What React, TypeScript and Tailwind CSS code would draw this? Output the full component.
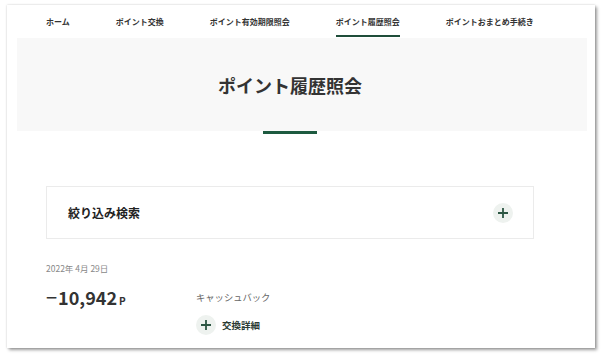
import React from 'react';

const tabs = ['ホーム', 'ポイント交換', 'ポイント有効期限照会', 'ポイント履歴照会', 'ポイントおまとめ手続き'];

function PlusIcon({ size = 12 }: { size?: number }) {
  return (
    <svg width={size} height={size} viewBox="0 0 12 12" fill="none">
      <path d="M6 1v10M1 6h10" stroke="#2c5643" strokeWidth="1.8" />
    </svg>
  );
}

export default function App() {
  return (
    <div className="w-[604px] h-[361px] bg-white pt-[5px] pl-[7px] font-['Noto_Sans_CJK_JP','Noto_Sans',sans-serif] text-[#333]">
      <div className="w-[588px] h-[343px] bg-white overflow-hidden shadow-[0_0_2px_rgba(0,0,0,0.18),2px_2px_3px_rgba(0,0,0,0.38)]">
        {/* Tabs */}
        <div className="h-[33px] flex pl-[39px] gap-[46px] text-[8px] font-bold">
          {tabs.map((t) => (
            <div key={t} className="relative h-full flex items-center">
              {t}
              {t === 'ポイント履歴照会' && (
                <div className="absolute left-0 right-0 bottom-[1px] h-[2px] bg-[#1f4d3a]" />
              )}
            </div>
          ))}
        </div>

        {/* Hero */}
        <div className="ml-[10px] w-[570px] h-[93px] bg-[#f8f8f8] flex items-center">
          <div className="ml-[29px] w-[488px] text-center text-[18px] font-bold leading-none text-[#333] mt-[1px]">
            ポイント履歴照会
          </div>
        </div>
        <div className="ml-[39px] w-[488px] flex justify-center">
          <div className="w-[54px] h-[3px] bg-[#1d5a40]" />
        </div>

        {/* Filter */}
        <div className="mt-[52px] ml-[39px] w-[488px] h-[53px] border border-[#ebebeb] flex items-center justify-between pl-[21px] pr-[20px]">
          <span className="text-[12px] font-bold text-[#222]">絞り込み検索</span>
          <button className="w-[20px] h-[20px] rounded-full bg-[#eef2ef] flex items-center justify-center">
            <PlusIcon />
          </button>
        </div>

        {/* History item */}
        <div className="ml-[39px] w-[488px]">
          <div className="mt-[23px] text-[8.5px] leading-[12px] text-[#888]">2022年 4月 29日</div>
          <div className="mt-[11px] flex items-start">
            <div className="w-[150px] leading-[24px] font-bold text-[#333]">
              <span className="text-[20px] font-normal mr-[1px]">−</span>
              <span className="text-[18px]">10,942</span>
              <span className="text-[10px] ml-[2px]">P</span>
            </div>
            <div>
              <div className="leading-[24px] text-[9.3px] text-[#666]">キャッシュバック</div>
              <div className="mt-[6px] flex items-center gap-[6px]">
                <div className="w-[20px] h-[20px] rounded-full bg-[#eef2ef] flex items-center justify-center">
                  <PlusIcon />
                </div>
                <span className="text-[9.5px] font-bold text-[#2a3a33]">交換詳細</span>
              </div>
            </div>
          </div>
        </div>
      </div>
    </div>
  );
}
